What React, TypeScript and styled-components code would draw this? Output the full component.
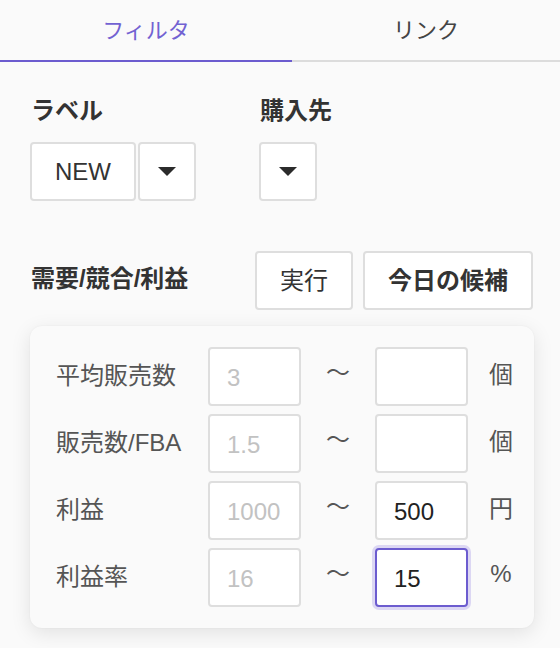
import React from "react";
import styled, { createGlobalStyle, css } from "styled-components";

const GlobalStyle = createGlobalStyle`
  html, body {
    margin: 0;
    padding: 0;
    background: #fafafa;
  }
  body {
    font-family: "Liberation Sans", "Noto Sans CJK JP", sans-serif;
    color: #333;
  }
  * { box-sizing: border-box; }
`;

const PURPLE = "#6c5ccf";

const Page = styled.div`
  width: 560px;
  min-height: 648px;
  background: #fafafa;
`;

const TabBar = styled.div`
  display: flex;
  height: 62px;
  border-bottom: 2px solid #dcdcdc;
`;

const Tab = styled.div<{ $active?: boolean; $width?: number }>`
  ${(p) => (p.$width ? css`width: ${p.$width}px;` : css`flex: 1;`)}
  display: flex;
  align-items: center;
  justify-content: center;
  font-size: 22px;
  padding-bottom: 4px;
  color: ${(p) => (p.$active ? "#7262d2" : "#444")};
  margin-bottom: -2px;
  border-bottom: 2px solid ${(p) => (p.$active ? PURPLE : "transparent")};
`;

const Content = styled.div`
  padding: 33px 26px 0 30px;
`;

const TopRow = styled.div`
  display: flex;
  gap: 63px;
`;

const Group = styled.div`
  display: flex;
  flex-direction: column;
  gap: 15px;
`;

const SectionLabel = styled.div`
  font-size: 24px;
  font-weight: 700;
  line-height: 32px;
  color: #333;
  padding-left: 1px;
`;

const ButtonRow = styled.div<{ $gap?: number }>`
  display: flex;
  gap: ${(p) => p.$gap ?? 2}px;
`;

const Button = styled.div<{ $width: number; $bold?: boolean; $cjk?: boolean }>`
  width: ${(p) => p.$width}px;
  height: 59px;
  background: #fff;
  border: 2px solid #dedede;
  border-radius: 4px;
  display: flex;
  align-items: center;
  justify-content: center;
  padding-bottom: ${(p) => (p.$cjk ? 5 : 0)}px;
  font-size: 24px;
  font-weight: ${(p) => (p.$bold ? 700 : 400)};
  color: #333;
`;

const Caret = styled.span`
  width: 0;
  height: 0;
  border-left: 9px solid transparent;
  border-right: 9px solid transparent;
  border-top: 9px solid #2b2b2b;
`;

const ActionRow = styled.div`
  display: flex;
  align-items: center;
  margin-top: 50px;
`;

const ActionLabel = styled.div`
  width: 225px;
  font-size: 24px;
  font-weight: 700;
  color: #333;
  padding: 0 0 8px 1px;
`;

const Card = styled.div`
  margin-top: 16px;
  width: 504px;
  background: #fafafa;
  border-radius: 12px;
  box-shadow: 0 5px 20px rgba(0, 0, 0, 0.1), 0 0 2px rgba(0, 0, 0, 0.05);
  padding: 21px 0 21px 26px;
  display: grid;
  grid-template-columns: 152px 93px 74px 93px 66px;
  row-gap: 8px;
  align-items: center;
`;

const RowLabel = styled.div`
  font-size: 24px;
  color: #555;
  padding-bottom: 6px;
`;

const NumInput = styled.input<{ $focused?: boolean }>`
  width: 93px;
  height: 59px;
  border: 2px solid #dedede;
  border-radius: 4px;
  background: #fff;
  padding: 2px 0 0 17px;
  font-family: "Liberation Sans", sans-serif;
  font-size: 24px;
  color: #222;
  outline: none;
  &::placeholder {
    color: #c2c2c2;
  }
  ${(p) =>
    p.$focused &&
    css`
      border-color: ${PURPLE};
      box-shadow: 0 0 0 3px #dcd7f3;
    `}
`;

const Tilde = styled.div`
  text-align: center;
  font-size: 24px;
  color: #555;
  font-family: "Noto Sans CJK JP", sans-serif;
  padding-bottom: 12px;
`;

const Unit = styled.div`
  text-align: center;
  font-size: 24px;
  color: #555;
  padding-bottom: 8px;
`;

type Row = { label: string; min: string; max: string; unit: string; focused?: boolean };

const rows: Row[] = [
  { label: "平均販売数", min: "3", max: "", unit: "個" },
  { label: "販売数/FBA", min: "1.5", max: "", unit: "個" },
  { label: "利益", min: "1000", max: "500", unit: "円" },
  { label: "利益率", min: "16", max: "15", unit: "%", focused: true },
];

export default function App() {
  return (
    <Page>
      <GlobalStyle />
      <TabBar>
        <Tab $active $width={292}>フィルタ</Tab>
        <Tab>リンク</Tab>
      </TabBar>
      <Content>
        <TopRow>
          <Group>
            <SectionLabel>ラベル</SectionLabel>
            <ButtonRow>
              <Button $width={106}>NEW</Button>
              <Button $width={58}>
                <Caret />
              </Button>
            </ButtonRow>
          </Group>
          <Group>
            <SectionLabel>購入先</SectionLabel>
            <ButtonRow>
              <Button $width={58}>
                <Caret />
              </Button>
            </ButtonRow>
          </Group>
        </TopRow>
        <ActionRow>
          <ActionLabel>需要/競合/利益</ActionLabel>
          <ButtonRow $gap={10}>
            <Button $width={98} $cjk>実行</Button>
            <Button $width={170} $bold $cjk>
              今日の候補
            </Button>
          </ButtonRow>
        </ActionRow>
        <Card>
          {rows.map((r) => (
            <React.Fragment key={r.label}>
              <RowLabel>{r.label}</RowLabel>
              <NumInput placeholder={r.min} defaultValue="" />
              <Tilde>〜</Tilde>
              <NumInput defaultValue={r.max} $focused={r.focused} />
              <Unit>{r.unit}</Unit>
            </React.Fragment>
          ))}
        </Card>
      </Content>
    </Page>
  );
}
